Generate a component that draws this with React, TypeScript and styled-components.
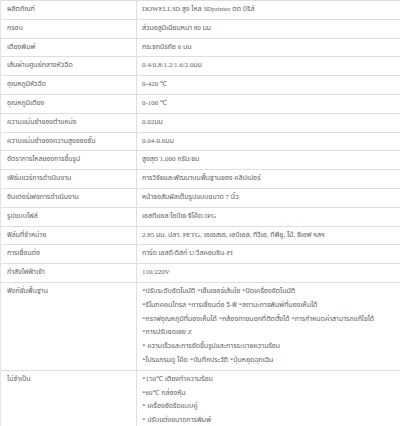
import React from "react";
import styled, { createGlobalStyle } from "styled-components";

const Global = createGlobalStyle`
  html, body { margin: 0; padding: 0; background: #ffffff; }
  body { font-family: "Liberation Serif", "Noto Sans Thai", "Noto Sans", serif; }
`;

const Table = styled.table`
  width: 400px;
  border-collapse: collapse;
  table-layout: fixed;
  font-size: 7px;
  color: #5c5c5c;
`;

const Row = styled.tr`
  border-top: 1px solid #dedede;
  border-bottom: 1px solid #dedede;
`;

const LabelCell = styled.td`
  padding: 2px 6px 2px 6px;
  line-height: 13.8px;
  height: 13.45px;
  vertical-align: top;
  border-left: 1px solid #e4e4e4;
  border-right: 1px solid #dedede;
  white-space: nowrap;
`;

const ValueCell = styled.td`
  padding: 2px 5px 2px 5px;
  line-height: 13.8px;
  vertical-align: top;
  white-space: nowrap;
`;

const Line = styled.div`
  line-height: 13.8px;
`;

const rows: [string, string[]][] = [
  ["ผลิตภัณฑ์", ["DOWELL3D สูง ไหล 3Dprinter ตด บิริส์"]],
  ["กรอบ", ["ส่วนอลูมิเนียมหนา 80 มม"]],
  ["เตียงพิมพ์", ["กระจกนิรภัย 6 มม"]],
  ["เส้นผ่านศูนย์กลางหัวฉีด", ["0.4/0.8/1.2/1.6/2.0มม"]],
  ["อุณหภูมิหัวฉีด", ["0-420 ℃"]],
  ["อุณหภูมิเตียง", ["0-100 ℃"]],
  ["ความแม่นยำของตำแหน่ง", ["0.02มม"]],
  ["ความแม่นยำของความสูงของชั้น", ["0.04-0.6มม"]],
  ["อัตราการไหลของการขึ้นรูป", ["สูงสุด 1,000 กรัม/ชม"]],
  ["เฟิร์มแวร์การดำเนินงาน", ["การวิจัยและพัฒนาบนพื้นฐานของ คลิปเปอร์"]],
  ["อินเตอร์เฟซการดำเนินงาน", ["หน้าจอสัมผัสเต็มรูปแบบขนาด 7 นิ้ว"]],
  ["รูปแบบไฟล์", ["เอสทีแอล/โอบีเจ/จีโค้ด/JPG"]],
  ["ฟิล์มที่จำหน่าย", ["2.85 มม. ปลา, PETG, เอเอสเอ, เอบีเอส, ทีวีเอ, ทีพียู, ไม้, ซีเอฟ ฯลฯ"]],
  ["การเชื่อมต่อ", ["การ์ด เอสดี/ดิสก์ U/วีสคอนซิน-FI"]],
  ["กำลังไฟฟ้าเข้า", ["110/220V"]],
  [
    "ฟังก์ชั่นพื้นฐาน",
    [
      "*ปรับระดับอัตโนมัติ *เซ็นเซอร์เส้นใย *ปิดเครื่องอัตโนมัติ",
      "*รีโมทคอนโทรล *การเชื่อมต่อ วี-ฟี *สถานะการพิมพ์ที่มองเห็นได้",
      "*กราฟอุณหภูมิที่มองเห็นได้ *กล้องภายนอกที่ติดตั้งได้ *การกำหนดค่าสามารถแก้ไขได้",
      "*การปรับชดเชย Z",
      "* ความเร็วและการอัดขึ้นรูปและการระบายความร้อน",
      "*โปรแกรมดู โค้ด *บันทึกประวัติ *ปุ่มหยุดฉุกเฉิน",
    ],
  ],
  [
    "ไม่จำเป็น",
    [
      "*150℃ เตียงทำความร้อน",
      "*60℃ กล่องหุ้ม",
      "* เครื่องอัดรีดแบบคู่",
      "* ปรับแต่งขนาดการพิมพ์",
    ],
  ],
];

export default function App() {
  return (
    <>
      <Global />
      <Table>
        <colgroup>
          <col style={{ width: 136 }} />
          <col />
        </colgroup>
        <tbody>
          {rows.map(([label, values]) => (
            <Row key={label}>
              <LabelCell>{label}</LabelCell>
              <ValueCell>
                {values.map((v) => (
                  <Line key={v}>{v}</Line>
                ))}
              </ValueCell>
            </Row>
          ))}
        </tbody>
      </Table>
    </>
  );
}
